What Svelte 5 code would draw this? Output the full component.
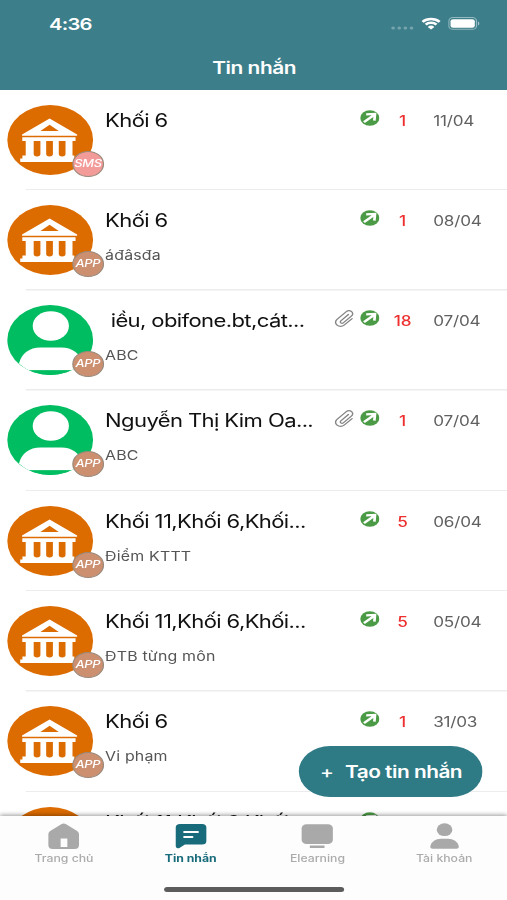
<script>
  const messages = [
    { type: 'school', channel: 'SMS', title: 'Khối 6', sub: '', count: 1, date: '11/04' },
    { type: 'school', channel: 'APP', title: 'Khối 6', sub: 'áđâsđa', count: 1, date: '08/04' },
    { type: 'person', channel: 'APP', title: '\u00a0iều, obifone.bt,cát...', sub: 'ABC', count: 18, date: '07/04', clip: true },
    { type: 'person', channel: 'APP', title: 'Nguyễn Thị Kim Oa...', sub: 'ABC', count: 1, date: '07/04', clip: true },
    { type: 'school', channel: 'APP', title: 'Khối 11,Khối 6,Khối...', sub: 'Điểm KTTT', count: 5, date: '06/04' },
    { type: 'school', channel: 'APP', title: 'Khối 11,Khối 6,Khối...', sub: 'ĐTB từng môn', count: 5, date: '05/04' },
    { type: 'school', channel: 'APP', title: 'Khối 6', sub: 'Vi phạm', count: 1, date: '31/03' },
    { type: 'school', title: 'Khối 11,Khối 6,Khối...' }
  ];
</script>

<div class="frame">
  <div class="phone">
    <header>
      <div class="status">
        <span class="time">4:36</span>
        <span class="indicators">
          <svg class="cell" width="19" height="6" viewBox="0 0 19 6">
            <circle cx="2" cy="3" r="1.5" /><circle cx="7" cy="3" r="1.5" /><circle cx="12" cy="3" r="1.5" /><circle cx="17" cy="3" r="1.5" />
          </svg>
          <svg width="16" height="13" viewBox="0 0 16 13">
            <path d="M1 4.900a9.900 9.900 0 0 1 14 0M3.600 7.600a6.200 6.200 0 0 1 8.800 0" fill="none" stroke="#fff" stroke-width="2.300" />
            <path d="M8 12.600 5.300 9.900a3.800 3.800 0 0 1 5.400 0z" fill="#fff" />
          </svg>
          <svg class="battery" width="26" height="13" viewBox="0 0 26 13">
            <rect x=".5" y=".5" width="22.6" height="11.8" rx="3.4" fill="none" stroke="#fff" stroke-opacity=".45" />
            <rect x="1.9" y="2.200" width="19.8" height="8.500" rx="2" fill="#fff" />
            <path d="M24.3 4.5v4c1.5-.6 1.5-3.4 0-4z" fill="#fff" fill-opacity=".55" />
          </svg>
        </span>
      </div>
      <h1>Tin nhắn</h1>
    </header>

    <main>
      {#each messages as m}
        <article>
          <div class="avatar {m.type}">
            <svg width="70" height="70" viewBox="0 0 70 70">
              {#if m.type === 'school'}
                <path fill="#fff" fill-rule="evenodd" d="M34.500 13.500 57 29.500v1.3h-45v-1.3zM34.500 19.800 27 26h15z" />
                <path fill="#fff" d="M12.200 32.200h43.500v3.900h-2.500V50.500h1.500v3h1.300v3.500H10.500V53.500h1.800v-3H15V36.100h-2.800z" />
                <path fill="#dc6b00" d="M21.500 36.100h5.500v13q0 2.400-2.750 2.400t-2.750-2.400zM31.700 36.100h5.500v13q0 2.400-2.750 2.400t-2.750-2.400zM42 36.100h5.500v13q0 2.400-2.750 2.400t-2.750-2.400z" />
              {:else}
                <circle cx="35.5" cy="21" r="14.8" fill="#fff" />
                <path fill="#fff" d="M9.500 58.500C11.500 48.500 18 42.500 27 42.500h17c9 0 15.500 6 17.500 16l-7 7h-38z" />
                <path fill="#00bd61" d="M16 65.200h38L48 70H22z" />
              {/if}
            </svg>
            {#if m.channel}
              <span class="badge" class:sms={m.channel === 'SMS'}>{m.channel}</span>
            {/if}
          </div>
          <div class="body">
            <div class="title">{m.title}</div>
            {#if m.sub}<div class="sub">{m.sub}</div>{/if}
          </div>
          <div class="icons">
            {#if m.clip}
              <svg class="clip" width="16" height="17" viewBox="0 0 16 17">
                <path d="M11.500 4.500 5.300 10.800a1.400 1.400 0 0 0 2 2l6.800-6.900a3 3 0 0 0-4.300-4.300L2.200 9.300a4.100 4.100 0 0 0 5.800 5.800l6.500-6.500" />
              </svg>
            {/if}
            <svg width="16" height="16" viewBox="0 0 16 16">
              <circle cx="8" cy="8" r="7.800" fill="#4b9a45" />
              <path d="M3.200 12.200 11 5.400M5 4.300l7.200-.3-.5 6.600" fill="none" stroke="#fff" stroke-width="2.200" />
            </svg>
          </div>
          {#if m.date}
            <span class="count">{m.count}</span>
            <span class="date">{m.date}</span>
          {/if}
        </article>
      {/each}
      <button class="create"><span class="plus">+</span><span>Tạo tin nhắn</span></button>
    </main>

    <nav>
      <div class="tabs">
        <div class="tab">
          <svg width="32" height="26" viewBox="0 0 32 26">
            <path fill="#a9a9a9" fill-rule="evenodd" d="M14 1.200q2-1.400 4 0L27 8q1.500 1.300 1.500 3v11q0 4-3.500 4H7q-3.500 0-3.500-4V11q0-1.700 1.500-3zM13.500 15.500v8.500h5.500v-8.500z" />
          </svg>
          <span>Trang chủ</span>
        </div>
        <div class="tab active">
          <svg width="32" height="26" viewBox="0 0 32 26">
            <path fill="#176b7b" d="M7 1h18q3.500 0 3.500 3.500V18q0 3.500-3.500 3.500H11L6.500 25Q3.500 26 3.500 22.500v-18Q3.500 1 7 1z" />
            <path d="M10.500 9h11M10.500 14h6.500" stroke="#fff" stroke-width="2" stroke-linecap="round" />
          </svg>
          <span>Tin nhắn</span>
        </div>
        <div class="tab">
          <svg width="32" height="26" viewBox="0 0 32 26">
            <rect x="3.300" y="1.300" width="25.500" height="19.700" rx="4" fill="#a9a9a9" />
            <path d="M10 23.700h12" stroke="#a9a9a9" stroke-width="2.600" />
          </svg>
          <span>Elearning</span>
        </div>
        <div class="tab">
          <svg width="32" height="26" viewBox="0 0 32 26">
            <circle cx="16" cy="6.700" r="6.400" fill="#a9a9a9" />
            <path fill="#a9a9a9" d="M4.300 24C5 18.500 9 15.800 13 15.800h6c4 0 8 2.700 8.700 8.200q0 1.800-2 1.800H6.300q-2 0-2-1.800z" />
          </svg>
          <span>Tài khoản</span>
        </div>
      </div>
      <div class="home"></div>
    </nav>
  </div>
</div>

<style>
  .frame {
    width: 507px;
    height: 900px;
    overflow: hidden;
    background: #fff;
  }
  /* 414pt wide phone layout shown on a wider viewport */
  .phone {
    width: 414px;
    height: 900px;
    display: flex;
    flex-direction: column;
    transform: scaleX(1.22464);
    transform-origin: 0 0;
    font-family: Inter, 'Liberation Sans', sans-serif;
    color: #111;
  }
  header {
    height: 89.5px;
    box-sizing: border-box;
    flex: none;
    background: #3c7e8a;
    color: #fff;
  }
  .status {
    height: 47px;
    padding: 0 22px 0 40px;
    display: flex;
    justify-content: space-between;
    align-items: center;
  }
  .time {
    font-size: 16.5px;
    font-weight: 600;
    letter-spacing: -0.6px;
    margin-top: 1px;
  }
  .indicators {
    display: flex;
    align-items: center;
    gap: 6px;
  }
  .cell {
    fill: #fff;
    opacity: 0.3;
    margin-top: 9px;
  }
  h1 {
    margin: 9px 0 0 1px;
    padding-top: 0.5px;
    font-size: 17px;
    line-height: 22px;
    font-weight: 600;
    letter-spacing: -0.35px;
    text-align: center;
  }
  main {
    flex: 1;
    min-height: 0;
    overflow: hidden;
    position: relative;
    padding-top: 0.5px;
  }
  article {
    height: 100.3px;
    box-sizing: border-box;
    padding: 14.500px 19px 0 5.800px;
    display: flex;
    background: linear-gradient(#ececec, #ececec) 21px 100% / 100% 1.500px no-repeat;
  }
  .avatar {
    position: relative;
    flex: none;
    width: 70px;
    height: 70px;
    border-radius: 50%;
    background: #dc6b00;
  }
  .avatar > svg {
    display: block;
    border-radius: 50%;
  }
  .avatar.person {
    background: #00bd61;
  }
  .badge {
    position: absolute;
    left: 53px;
    top: 46px;
    width: 26px;
    height: 26px;
    box-sizing: border-box;
    border: 0.600px solid #9a8a7c;
    border-radius: 50%;
    background: #cc9071;
    color: #fff;
    font: italic 500 10.5px/24px Inter, 'Liberation Sans', sans-serif;
    letter-spacing: -0.2px;
    display: flex;
    justify-content: center;
  }
  .badge.sms {
    background: #f39b99;
  }
  .body {
    width: 180px;
    flex: none;
    margin-left: 10px;
    white-space: nowrap;
  }
  .title {
    font-size: 18px;
    line-height: 24px;
    margin-top: 4px;
    letter-spacing: -0.5px;
  }
  .sub {
    margin-top: 13px;
    font-size: 13px;
    line-height: 18px;
    letter-spacing: 0.15px;
    color: #555;
  }
  .icons {
    width: 44px;
    flex: none;
    height: 16px;
    margin-top: 5px;
    display: flex;
    justify-content: flex-end;
    gap: 5px;
  }
  .clip path {
    fill: none;
    stroke: #858585;
    stroke-width: 1.200;
    stroke-linecap: round;
  }
  .count {
    width: 38px;
    flex: none;
    margin-top: 7px;
    text-align: center;
    font-size: 14px;
    line-height: 18px;
    font-weight: 500;
    color: #ee2f2f;
  }
  .date {
    margin-left: 6px;
    margin-top: 7px;
    font-size: 14px;
    line-height: 18px;
    color: #606060;
    letter-spacing: -0.2px;
  }
  .create {
    position: absolute;
    left: 244.300px;
    top: 656.500px;
    width: 150px;
    height: 51px;
    padding: 0;
    border: 0;
    border-radius: 25.500px;
    background: #2e7a85;
    color: #fff;
    font: 600 17px/22px Inter, 'Liberation Sans', sans-serif;
    letter-spacing: -0.4px;
    display: flex;
    align-items: center;
    justify-content: center;
    gap: 9.5px;
  }
  .plus {
    font-weight: 500;
  }
  nav {
    height: 84px;
    flex: none;
    position: relative;
    background: #fdfdfd;
    box-shadow: 0 -1px 4px rgba(0, 0, 0, 0.4);
  }
  .tabs {
    display: flex;
    padding-top: 6.500px;
  }
  .tab {
    flex: 1;
    display: flex;
    flex-direction: column;
    align-items: center;
    color: #ababab;
    font-size: 10px;
    line-height: 14px;
    font-weight: 500;
    padding-left: 1px;
  }
  .tab span {
    margin-top: 2.500px;
  }
  .tab.active {
    color: #176b7b;
    font-weight: 700;
  }
  .home {
    width: 147px;
    height: 5px;
    border-radius: 3px;
    background: #5c5c5c;
    margin: 22px auto 0;
  }
</style>
